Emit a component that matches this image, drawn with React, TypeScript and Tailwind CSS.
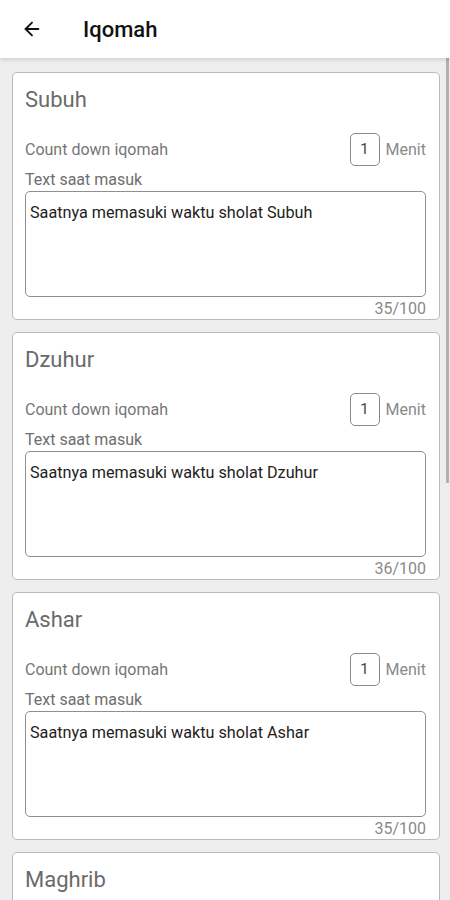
import { ArrowLeft } from "lucide-react";

const prayers = [
  { name: "Subuh", text: "Saatnya memasuki waktu sholat Subuh" },
  { name: "Dzuhur", text: "Saatnya memasuki waktu sholat Dzuhur" },
  { name: "Ashar", text: "Saatnya memasuki waktu sholat Ashar" },
  { name: "Maghrib", text: "Saatnya memasuki waktu sholat Maghrib" },
];

function PrayerCard({ name, text }: { name: string; text: string }) {
  return (
    <div className="flex flex-col rounded-[5px] border border-[#b9b9b9] bg-white pl-[12px] pr-[13px] pt-[13px] pb-[1px]">
      <div className="text-[22px] leading-[28px] text-[#6a6a6a]">{name}</div>
      <div className="mt-[19px] flex h-[33px] items-center">
        <span className="flex-1 text-[16px] text-[#767676]">Count down iqomah</span>
        <div className="flex h-[33px] w-[30px] items-center justify-center rounded-[5px] border border-[#8a8a8a] text-[15px] text-[#444]">
          1
        </div>
        <span className="ml-[6px] text-[16px] text-[#8a8a8a]">Menit</span>
      </div>
      <div className="mt-[5px] text-[16px] leading-[18px] text-[#6e6e6e]">Text saat masuk</div>
      <div className="mt-[2px] h-[106px] rounded-[5px] border border-[#8f8f8f] px-[4px] pt-[11px] text-[16.2px] leading-[20px] text-[#222]">
        {text}
      </div>
      <div className="mt-[3px] text-right text-[16px] leading-[18px] text-[#8a8a8a]">
        {text.length}/100
      </div>
    </div>
  );
}

export default function App() {
  return (
    <div
      className="relative h-[900px] overflow-hidden bg-[#eeeeee]"
      style={{ fontFamily: "Roboto, 'Noto Sans', sans-serif" }}
    >
      <header className="relative z-10 flex h-[58px] items-center bg-white shadow-[0_2px_4px_rgba(0,0,0,0.12)]">
        <ArrowLeft className="ml-[21px] h-[22px] w-[22px] text-[#111]" strokeWidth={2} />
        <h1 className="ml-[40px] text-[22px] font-medium text-[#111]">Iqomah</h1>
      </header>
      <div className="absolute right-[1px] top-[58px] h-[425px] w-[3px] bg-[#b0b0b0]" />
      <main className="flex flex-col gap-[12px] pl-[12px] pr-[10px] pt-[14px]">
        {prayers.map((p) => (
          <PrayerCard key={p.name} name={p.name} text={p.text} />
        ))}
      </main>
    </div>
  );
}
